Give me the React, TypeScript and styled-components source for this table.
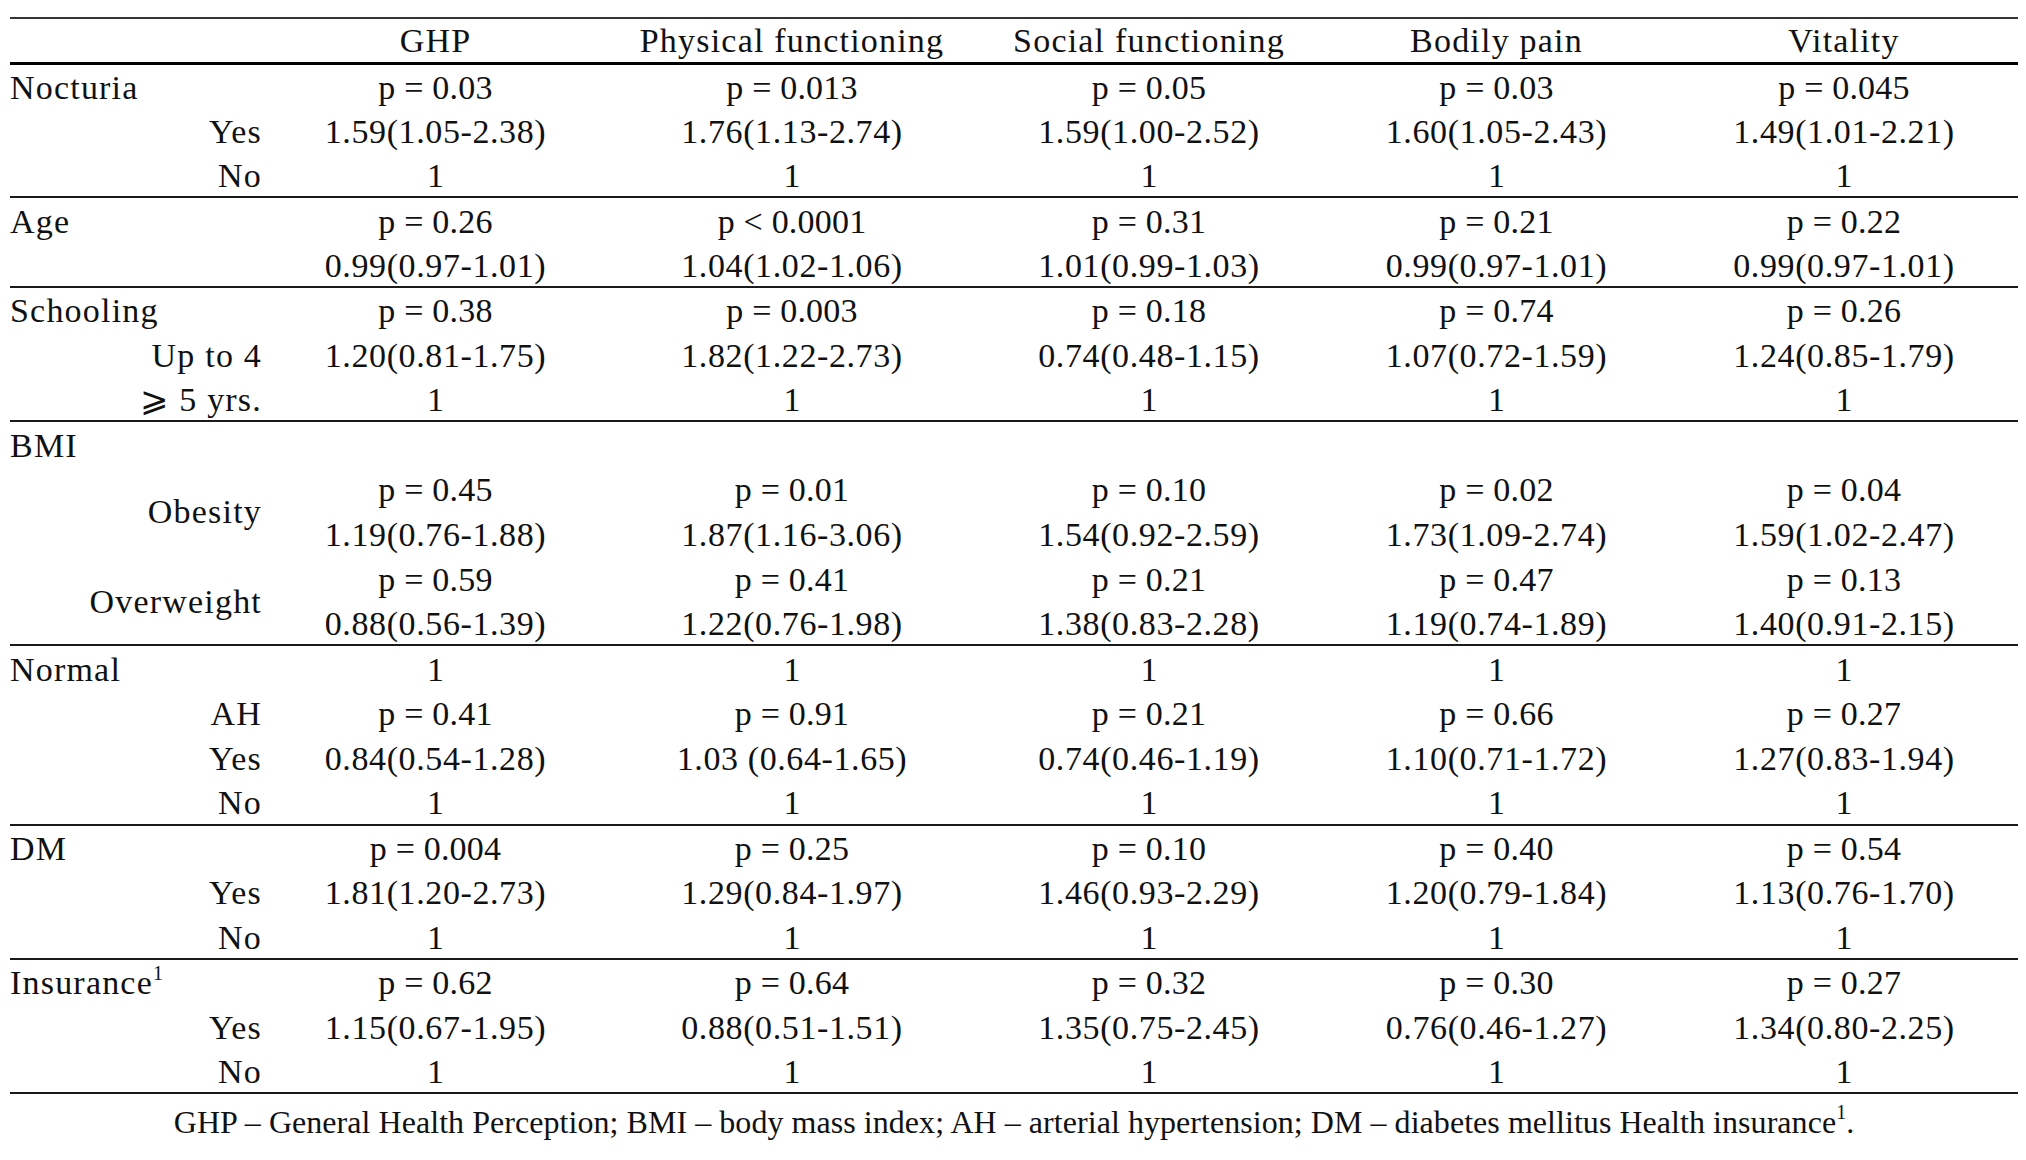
import React from "react";
import styled, { createGlobalStyle } from "styled-components";

const GlobalStyle = createGlobalStyle`
  html, body {
    margin: 0;
    padding: 0;
    background: #ffffff;
  }
`;

const Page = styled.div`
  padding: 17px 8px 0 10px;
  font-family: "Liberation Serif", "DejaVu Serif", serif;
  color: #111;
`;

const Table = styled.table`
  width: 2008px;
  border-collapse: collapse;
  table-layout: fixed;
  font-size: 34px;
  line-height: 1;
`;

const HeadRow = styled.tr`
  height: 45px;
  border-top: 2px solid #333;
  border-bottom: 3px solid #000;
`;

const Th = styled.th`
  font-weight: normal;
  text-align: center;
  padding: 1px 0 0;
  letter-spacing: 1.2px;
  white-space: nowrap;
`;

const Row = styled.tr<{ $divider: boolean; $last: boolean }>`
  height: 44.8px;
  border-top: ${(p) => (p.$divider ? "2px solid #1a1a1a" : "none")};
  border-bottom: ${(p) => (p.$last ? "2px solid #1a1a1a" : "none")};
`;

const LabelCell = styled.td<{ $kind: "group" | "sub" }>`
  text-align: ${(p) => (p.$kind === "group" ? "left" : "right")};
  padding: 3px 0 0;
  white-space: nowrap;
  letter-spacing: 1.2px;
  vertical-align: middle;
`;

const ValueCell = styled.td<{ $ci: boolean }>`
  text-align: center;
  padding: 3px 0 0;
  white-space: nowrap;
  letter-spacing: ${(p) => (p.$ci ? "0.6px" : "0.2px")};
  vertical-align: middle;
`;

const Sup = styled.sup`
  font-size: 20px;
  line-height: 0;
  vertical-align: 14px;
  letter-spacing: 0;
`;

const Footnote = styled.p`
  margin: 10px 0 0;
  width: 2008px;
  text-align: center;
  font-size: 32px;
  letter-spacing: 0.05px;
`;

type DataRow = {
  label?: string;
  kind?: "group" | "sub";
  span?: number;
  covered?: boolean;
  sup?: string;
  values: string[];
};

const ones = ["1", "1", "1", "1", "1"];

const groups: DataRow[][] = [
  [
    { label: "Nocturia", kind: "group", values: ["p = 0.03", "p = 0.013", "p = 0.05", "p = 0.03", "p = 0.045"] },
    { label: "Yes", kind: "sub", values: ["1.59(1.05-2.38)", "1.76(1.13-2.74)", "1.59(1.00-2.52)", "1.60(1.05-2.43)", "1.49(1.01-2.21)"] },
    { label: "No", kind: "sub", values: ones },
  ],
  [
    { label: "Age", kind: "group", values: ["p = 0.26", "p < 0.0001", "p = 0.31", "p = 0.21", "p = 0.22"] },
    { label: "", kind: "sub", values: ["0.99(0.97-1.01)", "1.04(1.02-1.06)", "1.01(0.99-1.03)", "0.99(0.97-1.01)", "0.99(0.97-1.01)"] },
  ],
  [
    { label: "Schooling", kind: "group", values: ["p = 0.38", "p = 0.003", "p = 0.18", "p = 0.74", "p = 0.26"] },
    { label: "Up to 4", kind: "sub", values: ["1.20(0.81-1.75)", "1.82(1.22-2.73)", "0.74(0.48-1.15)", "1.07(0.72-1.59)", "1.24(0.85-1.79)"] },
    { label: "\u2A7E 5 yrs.", kind: "sub", values: ones },
  ],
  [
    { label: "BMI", kind: "group", values: ["", "", "", "", ""] },
    { label: "Obesity", kind: "sub", span: 2, values: ["p = 0.45", "p = 0.01", "p = 0.10", "p = 0.02", "p = 0.04"] },
    { covered: true, values: ["1.19(0.76-1.88)", "1.87(1.16-3.06)", "1.54(0.92-2.59)", "1.73(1.09-2.74)", "1.59(1.02-2.47)"] },
    { label: "Overweight", kind: "sub", span: 2, values: ["p = 0.59", "p = 0.41", "p = 0.21", "p = 0.47", "p = 0.13"] },
    { covered: true, values: ["0.88(0.56-1.39)", "1.22(0.76-1.98)", "1.38(0.83-2.28)", "1.19(0.74-1.89)", "1.40(0.91-2.15)"] },
  ],
  [
    { label: "Normal", kind: "group", values: ones },
    { label: "AH", kind: "sub", values: ["p = 0.41", "p = 0.91", "p = 0.21", "p = 0.66", "p = 0.27"] },
    { label: "Yes", kind: "sub", values: ["0.84(0.54-1.28)", "1.03 (0.64-1.65)", "0.74(0.46-1.19)", "1.10(0.71-1.72)", "1.27(0.83-1.94)"] },
    { label: "No", kind: "sub", values: ones },
  ],
  [
    { label: "DM", kind: "group", values: ["p = 0.004", "p = 0.25", "p = 0.10", "p = 0.40", "p = 0.54"] },
    { label: "Yes", kind: "sub", values: ["1.81(1.20-2.73)", "1.29(0.84-1.97)", "1.46(0.93-2.29)", "1.20(0.79-1.84)", "1.13(0.76-1.70)"] },
    { label: "No", kind: "sub", values: ones },
  ],
  [
    { label: "Insurance", sup: "1", kind: "group", values: ["p = 0.62", "p = 0.64", "p = 0.32", "p = 0.30", "p = 0.27"] },
    { label: "Yes", kind: "sub", values: ["1.15(0.67-1.95)", "0.88(0.51-1.51)", "1.35(0.75-2.45)", "0.76(0.46-1.27)", "1.34(0.80-2.25)"] },
    { label: "No", kind: "sub", values: ones },
  ],
];

const headers = ["GHP", "Physical functioning", "Social functioning", "Bodily pain", "Vitality"];
const colWidths = [252, 347, 366, 348, 347, 348];

export default function App() {
  return (
    <Page>
      <GlobalStyle />
      <Table>
        <colgroup>
          {colWidths.map((w, i) => (
            <col key={i} style={{ width: w }} />
          ))}
        </colgroup>
        <thead>
          <HeadRow>
            <Th />
            {headers.map((h) => (
              <Th key={h}>{h}</Th>
            ))}
          </HeadRow>
        </thead>
        <tbody>
          {groups.map((g, gi) =>
            g.map((r, ri) => (
              <Row
                key={`${gi}-${ri}`}
                $divider={ri === 0 && gi > 0}
                $last={gi === groups.length - 1 && ri === g.length - 1}
              >
                {!r.covered && (
                  <LabelCell $kind={r.kind ?? "sub"} rowSpan={r.span}>
                    {r.label}
                    {r.sup && <Sup>{r.sup}</Sup>}
                  </LabelCell>
                )}
                {r.values.map((v, vi) => (
                  <ValueCell key={vi} $ci={v.includes("(")}>
                    {v}
                  </ValueCell>
                ))}
              </Row>
            ))
          )}
        </tbody>
      </Table>
      <Footnote>
        GHP – General Health Perception; BMI – body mass index; AH – arterial hypertension; DM – diabetes mellitus Health insurance<Sup>1</Sup>.
      </Footnote>
    </Page>
  );
}
